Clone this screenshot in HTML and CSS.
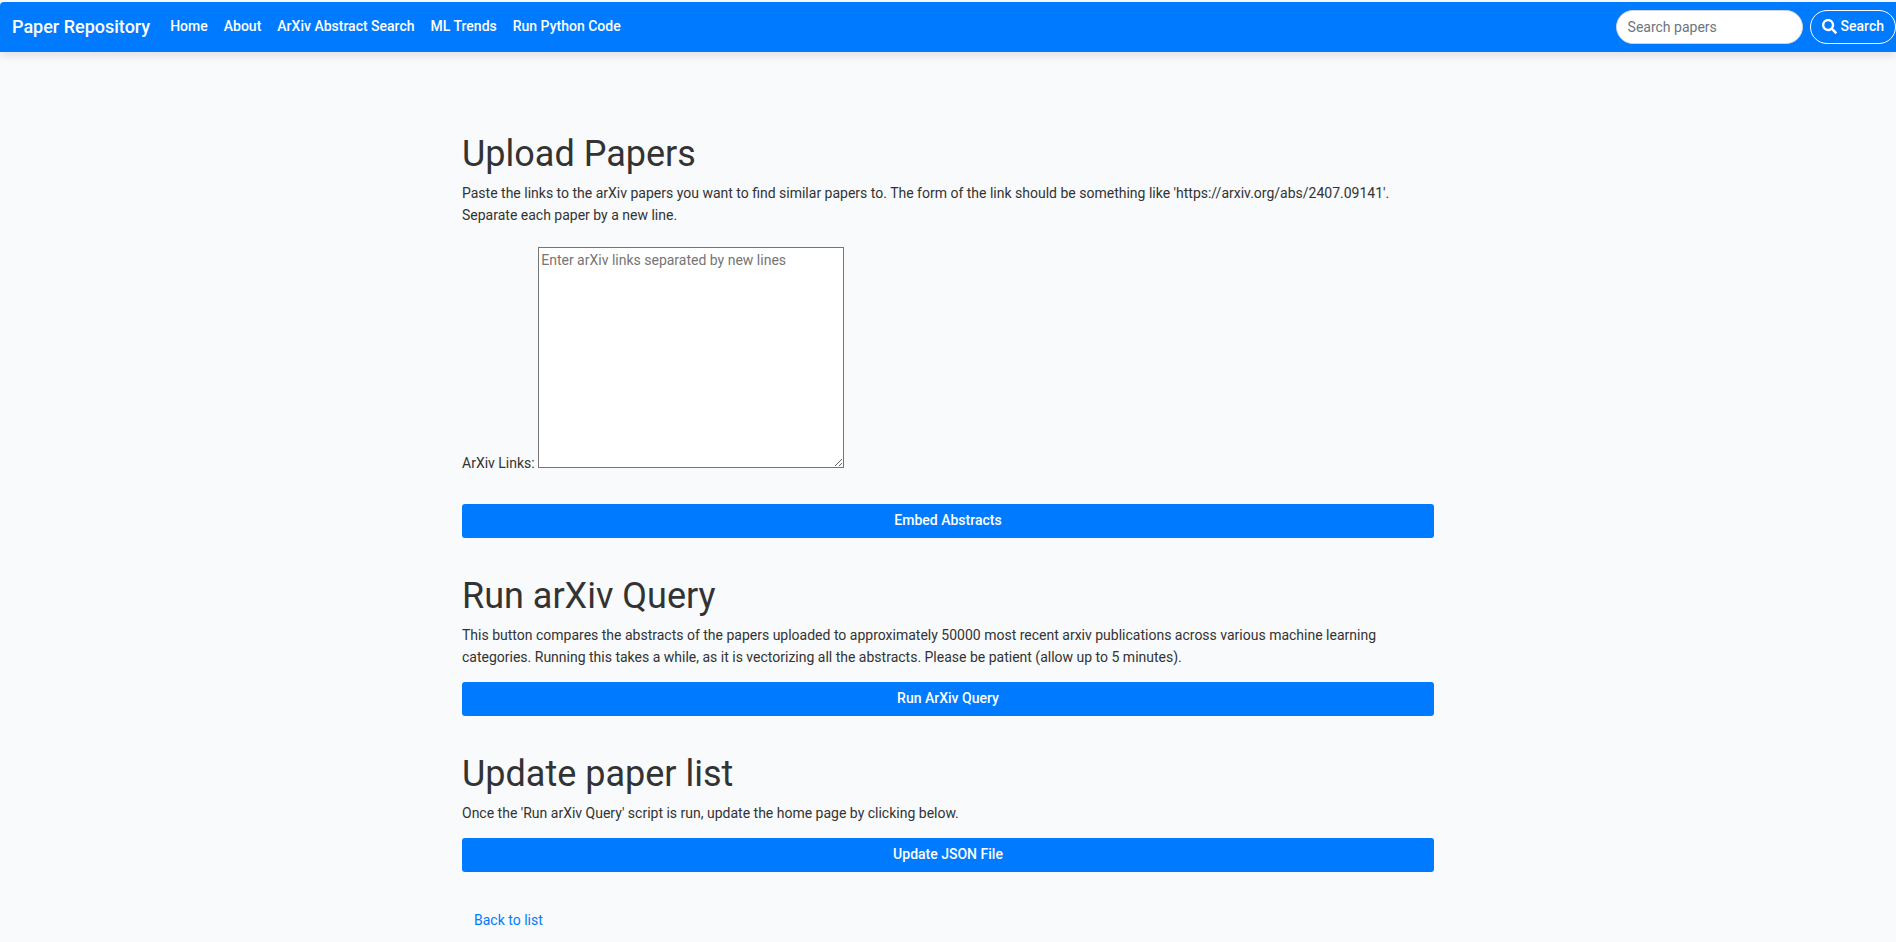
FILE: index.html
```html
<!DOCTYPE html>
<html lang="en">
<head>
<meta charset="utf-8">
<meta name="viewport" content="width=device-width, initial-scale=1">
<title>Paper Repository</title>
<link rel="stylesheet" href="styles.css">
</head>
<body>
<header class="navbar">
  <a class="brand" href="#">Paper Repository</a>
  <nav class="nav-links">
    <a href="#">Home</a>
    <a href="#">About</a>
    <a href="#">ArXiv Abstract Search</a>
    <a href="#">ML Trends</a>
    <a href="#">Run Python Code</a>
  </nav>
  <form class="search">
    <input class="search-input" type="search" placeholder="Search papers" aria-label="Search papers">
    <button class="search-button" type="submit">
      <svg class="icon" viewBox="0 0 512 512" aria-hidden="true"><path fill="currentColor" d="M505 442.700 405.300 343c-4.500-4.500-10.600-7-17-7H372c27.600-35.300 44-79.700 44-128C416 93.100 322.900 0 208 0S0 93.100 0 208s93.100 208 208 208c48.300 0 92.700-16.400 128-44v16.300c0 6.400 2.500 12.500 7 17l99.700 99.700c9.400 9.400 24.600 9.400 33.900 0l28.300-28.300c9.400-9.400 9.400-24.600.1-34zM208 336c-70.700 0-128-57.200-128-128 0-70.700 57.200-128 128-128 70.700 0 128 57.200 128 128 0 70.700-57.200 128-128 128z"/></svg>
      Search
    </button>
  </form>
</header>
<main class="container">
  <section class="section">
    <h1>Upload Papers</h1>
    <p>Paste the links to the arXiv papers you want to find similar papers to. The form of the link should be something like 'https://arxiv.org/abs/2407.09141'. Separate each paper by a new line.</p>
    <form>
      <div class="field">
        <label for="links">ArXiv Links:</label>
        <textarea id="links" placeholder="Enter arXiv links separated by new lines"></textarea>
      </div>
      <button class="button" type="submit">Embed Abstracts</button>
    </form>
  </section>
  <section class="section">
    <h1>Run arXiv Query</h1>
    <p>This button compares the abstracts of the papers uploaded to approximately 50000 most recent arxiv publications across various machine learning categories. Running this takes a while, as it is vectorizing all the abstracts. Please be patient (allow up to 5 minutes).</p>
    <button class="button" type="button">Run ArXiv Query</button>
  </section>
  <section class="section">
    <h1>Update paper list</h1>
    <p>Once the 'Run arXiv Query' script is run, update the home page by clicking below.</p>
    <button class="button" type="button">Update JSON File</button>
  </section>
  <a class="back-link" href="#">Back to list</a>
</main>
</body>
</html>
```
FILE: styles.css
```css
* {
  box-sizing: border-box;
}

body {
  margin: 0;
  padding-top: 2px;
  background: #f8fafc;
  color: #333;
  font: 14px/22px Roboto, sans-serif;
}

a {
  color: #007bff;
  text-decoration: none;
}

input,
textarea,
button {
  font: inherit;
}

.navbar {
  display: flex;
  align-items: center;
  height: 50px;
  padding-left: 12px;
  border-top-left-radius: 4px;
  background: #007bff;
  box-shadow: 0 4px 8px rgba(0, 0, 0, 0.1);
}

.navbar a {
  color: #fff;
  font-weight: 500;
}

.navbar .brand {
  margin-right: 20px;
  font-size: 18px;
}

.nav-links {
  display: flex;
  gap: 16px;
  padding-bottom: 2px;
}

.search {
  display: flex;
  gap: 7px;
  margin-left: auto;
}

.search-input {
  width: 187px;
  height: 34px;
  padding: 0 11px;
  border: 1px solid #ced4da;
  border-radius: 17px;
  background: #fff;
  color: #495057;
}

.search-input::placeholder {
  color: #6c757d;
}

.search-button {
  display: flex;
  align-items: center;
  gap: 4px;
  height: 34px;
  padding: 0 11px 2px;
  border: 1px solid #fff;
  border-radius: 17px;
  background: transparent;
  color: #fff;
  font-weight: 500;
}

.icon {
  width: 15px;
  height: 15px;
}

.container {
  max-width: 1002px;
  margin: 0 auto;
  padding: 81px 15px 7px;
}

.section {
  margin-bottom: 37px;
}

h1 {
  margin: 0 0 6px;
  font-size: 36px;
  font-weight: 400;
  line-height: 43px;
}

p {
  margin: 0 0 14px;
}

.field {
  padding: 7px 0 30px;
}

textarea {
  width: 306px;
  height: 221px;
  padding: 1px 2px;
  border: 1px solid #767676;
  border-radius: 0;
  background: #fff;
}

textarea::placeholder {
  color: #757575;
}

.button {
  display: block;
  width: 100%;
  height: 34px;
  padding: 0 12px 2px;
  border: 0;
  border-radius: 3px;
  background: #007bff;
  color: #fff;
  font-weight: 500;
}

.back-link {
  display: inline-block;
  margin-top: -10px;
  padding: 6px 12px;
}
```
